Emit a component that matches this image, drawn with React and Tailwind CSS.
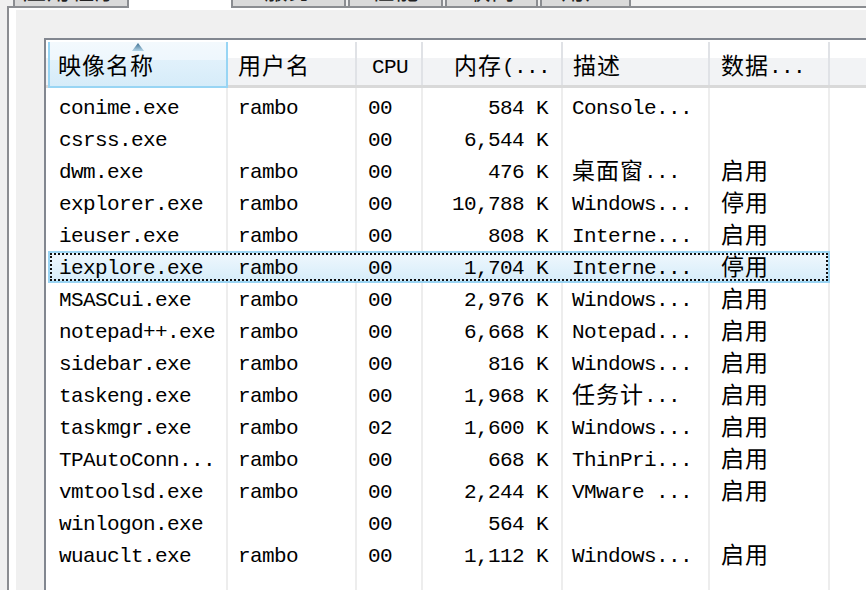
import React from "react";

const ROWS = [
  ["conime.exe", "rambo", "00", "584 K", "Console...", ""],
  ["csrss.exe", "", "00", "6,544 K", "", ""],
  ["dwm.exe", "rambo", "00", "476 K", "桌面窗...", "启用"],
  ["explorer.exe", "rambo", "00", "10,788 K", "Windows...", "停用"],
  ["ieuser.exe", "rambo", "00", "808 K", "Interne...", "启用"],
  ["iexplore.exe", "rambo", "00", "1,704 K", "Interne...", "停用"],
  ["MSASCui.exe", "rambo", "00", "2,976 K", "Windows...", "启用"],
  ["notepad++.exe", "rambo", "00", "6,668 K", "Notepad...", "启用"],
  ["sidebar.exe", "rambo", "00", "816 K", "Windows...", "启用"],
  ["taskeng.exe", "rambo", "00", "1,968 K", "任务计...", "启用"],
  ["taskmgr.exe", "rambo", "02", "1,600 K", "Windows...", "启用"],
  ["TPAutoConn...", "rambo", "00", "668 K", "ThinPri...", "启用"],
  ["vmtoolsd.exe", "rambo", "00", "2,244 K", "VMware ...", "启用"],
  ["winlogon.exe", "", "00", "564 K", "", ""],
  ["wuauclt.exe", "rambo", "00", "1,112 K", "Windows...", "启用"],
];

const CJK = /[\u3000-\u9fff\uff00-\uffef]/;

function T({ s }) {
  const parts = s.match(/[\u3000-\u9fff\uff00-\uffef]+|[^\u3000-\u9fff\uff00-\uffef]+/g) || [];
  return parts.map((p, i) =>
    CJK.test(p) ? (
      <span key={i} className="text-[23px] tracking-[1px]">
        {p}
      </span>
    ) : (
      <span key={i}>{p}</span>
    )
  );
}

const BODY_COLS = [
  "w-[180px] pl-[11px]",
  "w-[129px] pl-[10px]",
  "w-[66px] pl-[11px]",
  "w-[140px] justify-end pr-[13px]",
  "w-[147px] pl-[9px]",
  "w-[120px] pl-[11px]",
];

function Cells({ row, sel, className = "" }) {
  return (
    <div className={`flex h-full ${className}`}>
      {BODY_COLS.map((c, i) => (
        <div
          key={i}
          className={`${c} shrink-0 h-full flex items-center pt-[4px] whitespace-pre overflow-hidden border-r-2 ${
            sel ? "border-transparent" : "border-[#ededed]"
          }`}
        >
          {row ? <T s={row[i]} /> : null}
        </div>
      ))}
    </div>
  );
}

function Row({ row, sel }) {
  return (
    <div className="flex h-[32px] shrink-0">
      <div className={`relative flex ${sel ? "bg-linear-to-b from-[#f1f8fd] to-[#d4ecfa]" : ""}`}>
        <Cells row={row} sel={sel} />
        {sel && (
          <div className="absolute inset-0 border-2 border-[#9ad4f3] pointer-events-none">
            <div className="absolute inset-0 border-2 border-dotted border-[#111111]" />
          </div>
        )}
      </div>
      <div className="flex-1" />
    </div>
  );
}

function HeadCell({ w, className = "", children }) {
  return (
    <div className={`${w} shrink-0 flex`}>
      <div className={`flex-1 flex pt-[11px] items-center whitespace-pre overflow-hidden ${className}`}>
        {children}
      </div>
      <div className="w-[2px] mt-[2px] bg-[#e0e2e6]" />
    </div>
  );
}

const TABS = [
  { w: "w-[116px]", label: "应用程序", sel: false },
  { w: "w-[102px]", label: "", sel: true },
  { w: "w-[115px]", label: "服务", sel: false },
  { w: "w-[95px] ml-[2px]", label: "性能", sel: false },
  { w: "w-[93px] ml-[2px]", label: "联网", sel: false },
  { w: "w-[91px] ml-[2px]", label: "用户", sel: false },
];

export default function App() {
  return (
    <div className="w-[866px] h-[590px] overflow-hidden bg-[#f0f0f0] flex flex-col text-black font-[family-name:'Liberation_Mono','Noto_Sans_CJK_SC',monospace] text-[21px] tracking-[-0.6px] leading-[32px]">
      {/* tab strip */}
      <div className="flex h-[6px] items-start shrink-0 pl-[13px]">
        {TABS.map((t, i) =>
          t.sel ? (
            <div key={i} className={`${t.w} h-[8px] bg-white relative z-10 shrink-0`} />
          ) : (
            <div
              key={i}
              className={`${t.w} h-[6px] shrink-0 border-x-2 border-[#8b8d91] bg-[#dadada] overflow-hidden flex justify-center`}
            >
              <div className="-mt-[19px] text-[23px] leading-[24px] tracking-[1px] text-[#222]">{t.label}</div>
            </div>
          )
        )}
      </div>

      {/* tab page */}
      <div className="ml-[7px] flex-1 min-h-0 flex flex-col border-l-2 border-t-2 border-[#8b8d91] bg-white pl-[7px] pt-[2px]">
        <div className="flex-1 min-h-0 flex flex-col bg-[#f0f0f0] pl-[28px] pt-[28px]">
          {/* list view */}
          <div className="flex-1 min-h-0 flex flex-col overflow-hidden border-l-2 border-t-2 border-[#828790] bg-white">
            {/* header */}
            <div className="flex h-[48px] shrink-0 pl-[2px] border-b-[3px] border-[#d9d9d9] bg-[linear-gradient(to_bottom,#ffffff_0%,#ffffff_40%,#f2f3f5_40%,#f2f3f5_100%)] leading-[24px]">
              <div className="w-[180px] shrink-0 relative mt-[2px] -mb-[3px] border-x-2 border-b-2 border-[#98d5f4] bg-[linear-gradient(to_bottom,#f3f9fd_0%,#eef7fd_40%,#e1f1fb_40%,#d6ecf9_100%)] flex items-center pt-[8px] pl-[8px]">
                <svg
                  className="absolute top-[1px] left-1/2 -translate-x-1/2"
                  width="12"
                  height="8"
                  viewBox="0 0 12 8"
                >
                  <defs>
                    <linearGradient id="sa" x1="0" y1="0" x2="0" y2="1">
                      <stop offset="0" stopColor="#3a6c8e" />
                      <stop offset="1" stopColor="#b4d5e8" />
                    </linearGradient>
                  </defs>
                  <path d="M6 0 L12 8 L0 8 Z" fill="url(#sa)" />
                </svg>
                <T s="映像名称" />
              </div>
              <HeadCell w="w-[129px]" className="pl-[10px]">
                <T s="用户名" />
              </HeadCell>
              <HeadCell w="w-[66px]" className="pl-[15px]">
                <T s="CPU" />
              </HeadCell>
              <HeadCell w="w-[140px]" className="justify-end pr-[11px]">
                <T s="内存(..." />
              </HeadCell>
              <HeadCell w="w-[147px]" className="pl-[10px]">
                <T s="描述" />
              </HeadCell>
              <HeadCell w="w-[120px]" className="pl-[11px]">
                <T s="数据..." />
              </HeadCell>
              <div className="flex-1" />
            </div>

            {/* body */}
            <div className="flex-1 min-h-0 flex flex-col pl-[2px]">
              <div className="h-[3px] shrink-0 flex">
                <Cells />
              </div>
              {ROWS.map((r, i) => (
                <Row key={i} row={r} sel={i === 5} />
              ))}
              <div className="flex-1 flex">
                <Cells />
              </div>
            </div>
          </div>
        </div>
      </div>
    </div>
  );
}
